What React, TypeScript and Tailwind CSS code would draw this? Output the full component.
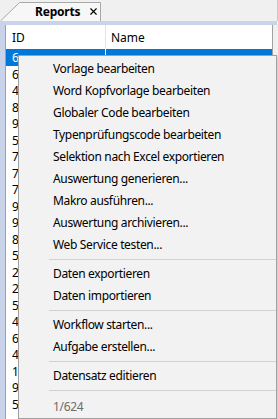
import { X } from 'lucide-react'

const ids = ['6', '6', '4', '8', '9', '5', '7', '7', '7', '9', '9', '8', '5', '2', '2', '5', '4', '6', '4', '1', '9', '5']

type Entry = { label: string } | 'sep'

const menu: Entry[] = [
  { label: 'Vorlage bearbeiten' },
  { label: 'Word Kopfvorlage bearbeiten' },
  { label: 'Globaler Code bearbeiten' },
  { label: 'Typenprüfungscode bearbeiten' },
  { label: 'Selektion nach Excel exportieren' },
  { label: 'Auswertung generieren...' },
  { label: 'Makro ausführen...' },
  { label: 'Auswertung archivieren...' },
  { label: 'Web Service testen...' },
  'sep',
  { label: 'Daten exportieren' },
  { label: 'Daten importieren' },
  'sep',
  { label: 'Workflow starten...' },
  { label: 'Aufgabe erstellen...' },
  'sep',
  { label: 'Datensatz editieren' },
  'sep',
]

function Tab() {
  return (
    <div className="relative h-[21px] w-[101px]">
      <svg className="absolute inset-0" width="101" height="21" viewBox="0 0 101 21">
        <path d="M0.5 21 L19.5 2.5 L100.5 2.5 L100.5 21" fill="#f7f7f7" stroke="#a8a8a8" />
      </svg>
      <div className="relative flex h-full items-center pl-[35px] pt-[2px]">
        <span className="text-[12px] font-bold tracking-[-0.2px] text-black">Reports</span>
        <X className="ml-[8px] h-[11px] w-[11px] text-black" strokeWidth={2.5} />
      </div>
    </div>
  )
}

export default function App() {
  return (
    <div className="relative h-[419px] w-[278px] overflow-hidden bg-[#f0f0f0] font-['Noto_Sans',sans-serif] text-[12px] text-black">
      <div className="flex h-[21px] border-r border-[#c9c9c9]">
        <Tab />
      </div>
      <div className="h-[4px] w-[277px] bg-[#c9d3ea]" />
      <div className="flex h-[394px]">
        <div className="w-[5px] bg-[#c9d3ea]" />
        <div className="w-[1px] bg-[#a0a0a0]" />
        <div className="flex w-[266px] flex-col bg-white">
          <div className="flex h-[24px] items-center">
            <div className="h-full w-[100px] border-r border-[#e3e3e3] pl-[6px] leading-[25px]">ID</div>
            <div className="pl-[5px] pt-[1px]">Name</div>
          </div>
          <div className="flex h-[16.5px] bg-[#0078d7] text-white">
            <div className="w-[100px] border-r border-white pl-[6px] leading-[17px]">6</div>
          </div>
          {ids.slice(1).map((d, i) => (
            <div key={i} className="h-[16.5px] pl-[6px] leading-[17px]">
              {d}
            </div>
          ))}
        </div>
        <div className="w-[1px] bg-[#a0a0a0]" />
      </div>

      <div className="absolute left-[18px] top-[55px] h-[364px] w-[259px] border border-[#a0a0a0] bg-[#f2f2f2] tracking-[-0.35px] shadow-[2px_2px_3px_rgba(0,0,0,0.15)]">
        <div className="flex flex-col pt-[2px]">
          {menu.map((m, i) =>
            m === 'sep' ? (
              <div key={i} className="flex h-[7px] items-center pl-[30px]">
                <div className="h-px w-full bg-[#d2d2d2]" />
              </div>
            ) : (
              <div key={i} className="flex h-[22px] items-center pl-[34px] whitespace-nowrap">
                {m.label}
              </div>
            )
          )}
          <div className="flex h-[24px] items-center pl-[34px] pt-[2px] text-[#6d6d6d]">1/624</div>
        </div>
      </div>
    </div>
  )
}
